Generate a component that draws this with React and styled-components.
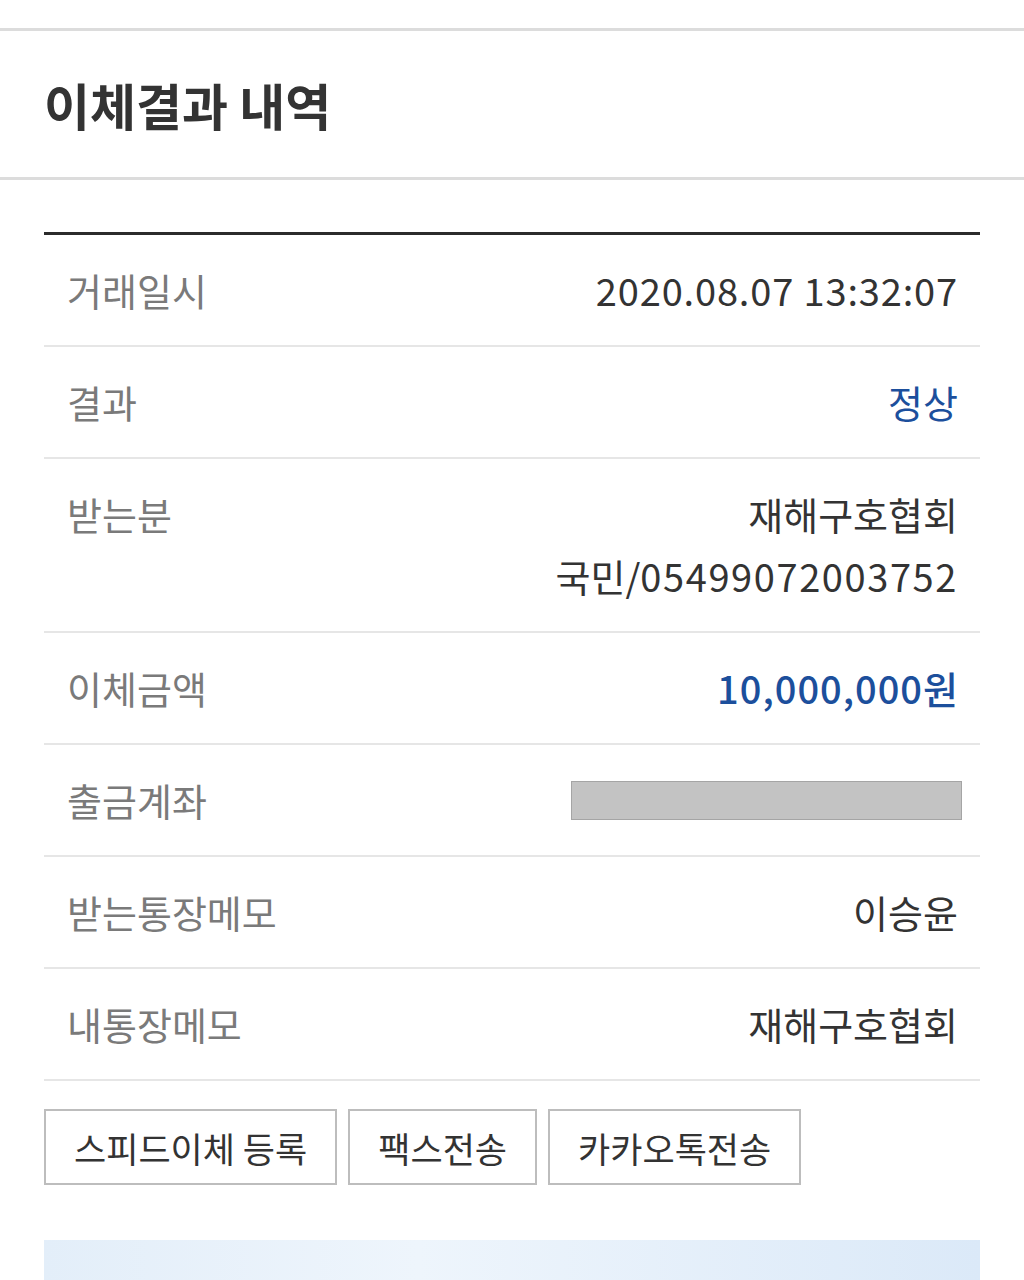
import React from "react";
import styled, { createGlobalStyle } from "styled-components";

const GlobalStyle = createGlobalStyle`
  html, body {
    margin: 0;
    padding: 0;
    background: #ffffff;
  }
  body {
    font-family: "Noto Sans CJK KR", "Noto Sans", sans-serif;
    -webkit-font-smoothing: antialiased;
  }
`;

const Page = styled.div`
  width: 1024px;
  height: 1280px;
  overflow: hidden;
  padding-top: 28px;
  box-sizing: border-box;
`;

const Header = styled.header`
  height: 146px;
  border-top: 3px solid #dcdcdc;
  border-bottom: 3px solid #dcdcdc;
  display: flex;
  align-items: center;
  padding-left: 44px;
`;

const Title = styled.h1`
  margin: 0;
  font-size: 50px;
  font-weight: 700;
  color: #333333;
`;

const Content = styled.section`
  padding: 52px 44px 0;
`;

const Table = styled.div`
  border-top: 3px solid #2b2b2b;
`;

const Row = styled.div`
  display: flex;
  justify-content: space-between;
  align-items: ${(p) => (p.$multi ? "flex-start" : "center")};
  height: ${(p) => (p.$multi ? "174px" : "112px")};
  padding: ${(p) => (p.$multi ? "24px 22px 0 23px" : "0 22px 0 23px")};
  border-bottom: 2px solid #e6e6e6;
  box-sizing: border-box;
`;

const Label = styled.div`
  font-size: 38px;
  font-weight: 400;
  line-height: 62px;
  color: #7a7a7a;
`;

const Value = styled.div`
  font-size: 38px;
  font-weight: 400;
  color: ${(p) => (p.$blue ? "#1c4f9c" : "#333333")};
  text-align: right;
  line-height: 62px;
`;

const Num = styled.span`
  letter-spacing: ${(p) => p.$ls || "1px"};
`;

const Amount = styled(Value)`
  font-weight: 500;
`;

const Masked = styled.div`
  width: 391px;
  height: 39px;
  background: #c3c3c3;
  border: 1px solid #a5a5a5;
  box-sizing: border-box;
  margin-right: -4px;
`;

const Buttons = styled.div`
  display: flex;
  gap: 11px;
  margin-top: 28px;
`;

const Button = styled.button`
  height: 76px;
  padding: 0 28px;
  background: #ffffff;
  border: 2px solid #bdbdbd;
  font-family: "Noto Sans CJK KR", "Noto Sans", sans-serif;
  font-size: 35px;
  color: #333333;
  cursor: pointer;
`;

const Banner = styled.div`
  margin-top: 55px;
  height: 120px;
  background: linear-gradient(90deg, #e3eef9 0%, #eef5fc 40%, #dbe9f8 100%);
`;

const App = () => {
  return (
    <Page>
      <GlobalStyle />
      <Header>
        <Title>이체결과 내역</Title>
      </Header>
      <Content>
        <Table>
          <Row>
            <Label>거래일시</Label>
            <Value>
              <Num $ls="0.85px">2020.08.07 13:32:07</Num>
            </Value>
          </Row>
          <Row>
            <Label>결과</Label>
            <Value $blue>정상</Value>
          </Row>
          <Row $multi>
            <Label>받는분</Label>
            <Value>
              재해구호협회
              <br />
              국민/<Num $ls="1.6px">05499072003752</Num>
            </Value>
          </Row>
          <Row>
            <Label>이체금액</Label>
            <Amount $blue>
              <Num>10,000,000</Num>원
            </Amount>
          </Row>
          <Row>
            <Label>출금계좌</Label>
            <Masked />
          </Row>
          <Row>
            <Label>받는통장메모</Label>
            <Value>이승윤</Value>
          </Row>
          <Row>
            <Label>내통장메모</Label>
            <Value>재해구호협회</Value>
          </Row>
        </Table>
        <Buttons>
          <Button>스피드이체 등록</Button>
          <Button>팩스전송</Button>
          <Button>카카오톡전송</Button>
        </Buttons>
        <Banner />
      </Content>
    </Page>
  );
};

export default App;
